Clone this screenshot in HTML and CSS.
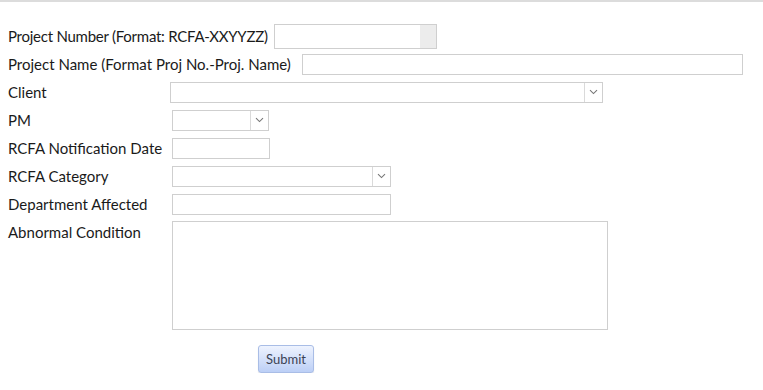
FILE: index.html
```html
<!DOCTYPE html>
<html>
<head>
<meta charset="utf-8">
<link rel="stylesheet" href="styles.css">
</head>
<body>
<div class="topline"></div>
<form class="form">
  <div class="row inline">
    <label class="lbl tight">Project Number (Format: RCFA-XXYYZZ)</label>
    <input class="field num" type="text">
  </div>
  <div class="row inline">
    <label class="lbl wide">Project Name (Format Proj No.-Proj. Name)</label>
    <input class="field name" type="text">
  </div>
  <div class="row">
    <label class="lbl col">Client</label>
    <span class="sel client"><span class="arrow"><svg width="9" height="6" viewBox="0 0 9 6"><path d="M1 1.2 L4.5 4.6 L8 1.2" fill="none" stroke="#777" stroke-width="1.1"/></svg></span></span>
  </div>
  <div class="row">
    <label class="lbl col">PM</label>
    <span class="sel pm"><span class="arrow"><svg width="9" height="6" viewBox="0 0 9 6"><path d="M1 1.2 L4.5 4.6 L8 1.2" fill="none" stroke="#777" stroke-width="1.1"/></svg></span></span>
  </div>
  <div class="row">
    <label class="lbl col">RCFA Notification Date</label>
    <input class="field date" type="text">
  </div>
  <div class="row">
    <label class="lbl col">RCFA Category</label>
    <span class="sel cat"><span class="arrow"><svg width="9" height="6" viewBox="0 0 9 6"><path d="M1 1.2 L4.5 4.6 L8 1.2" fill="none" stroke="#777" stroke-width="1.1"/></svg></span></span>
  </div>
  <div class="row">
    <label class="lbl col">Department Affected</label>
    <input class="field dept" type="text">
  </div>
  <div class="row top">
    <label class="lbl col">Abnormal Condition</label>
    <textarea class="area"></textarea>
  </div>
  <div class="actions">
    <button class="submit" type="button">Submit</button>
  </div>
</form>
</body>
</html>
```
FILE: styles.css
```css
* { box-sizing: border-box; }
body {
  margin: 0;
  background: #fff;
  font-family: Lato, "Open Sans", sans-serif;
  font-size: 15px;
  color: #1a1a1a;
}
.topline {
  height: 2px;
  background: #dcdcdc;
}
.form {
  padding: 20px 0 0 8px;
  display: flex;
  flex-direction: column;
}
.row {
  display: flex;
  align-items: center;
  height: 28px;
}
.lbl.tight { letter-spacing: -0.25px; margin-right: 6px; }
.lbl.wide { margin-right: 11px; }
.row.top {
  align-items: flex-start;
  height: auto;
  padding-top: 3px;
}
.row.top .lbl { line-height: 22px; }
.lbl { white-space: nowrap; }
.lbl.col { width: 164px; flex: none; }
.field {
  border: 1px solid #cfcfcf;
  height: 21px;
  padding: 0;
  margin: 0;
  font: inherit;
  background: #fff;
}
.field.num {
  width: 163px;
  height: 25px;
  background: linear-gradient(to left, #ececec 16px, #fff 16px);
}
.field.name { width: 441px; }
.field.date { width: 98px; }
.field.dept { width: 219px; }
.sel {
  position: relative;
  display: block;
  height: 21px;
  border: 1px solid #cfcfcf;
  background: #fff;
}
.sel.client { width: 433px; margin-left: -2px; }
.sel.pm { width: 97px; }
.sel.cat { width: 219px; }
.arrow {
  position: absolute;
  right: 0;
  top: 0;
  bottom: 0;
  width: 18px;
  border-left: 1px solid #dadada;
  display: flex;
  align-items: center;
  justify-content: center;
}
.area {
  width: 436px;
  height: 109px;
  border: 1px solid #cfcfcf;
  resize: none;
  margin: 0;
  padding: 0;
}
.actions {
  padding: 15px 0 0 250px;
}
.submit {
  width: 56px;
  height: 28px;
  border: 1px solid #a9bde6;
  border-radius: 3px;
  background: linear-gradient(to bottom, #eef3fe, #bccff6);
  font-family: Lato, "Open Sans", sans-serif;
  font-size: 13px;
  color: #3b4254;
  padding: 0;
  box-shadow: 0 1px 1px rgba(0,0,0,0.12);
}
```
